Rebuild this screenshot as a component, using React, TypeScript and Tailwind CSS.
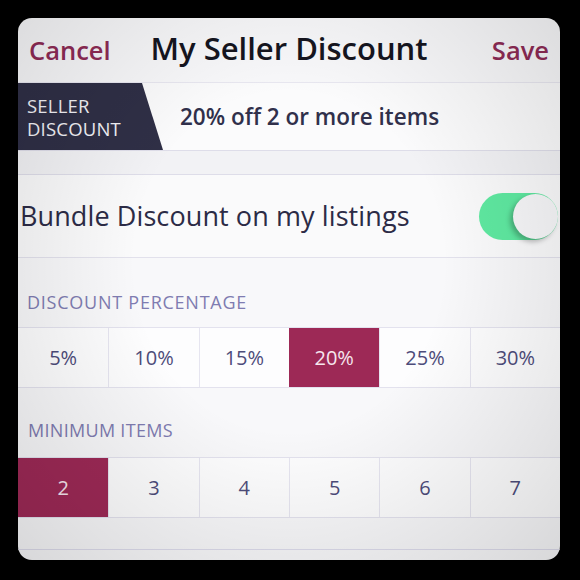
import React from "react";

const percents = ["5%", "10%", "15%", "20%", "25%", "30%"];
const items = ["2", "3", "4", "5", "6", "7"];

function OptionRow({ values, selected }: { values: string[]; selected: string }) {
  return (
    <div className="grid grid-cols-6 h-[61px] border-y border-[#e3e2ee] bg-[#fdfdfe]">
      {values.map((v, i) => (
        <div
          key={v}
          className={
            v === selected
              ? "flex items-center justify-center bg-[#9d2956] text-[#f6e6ee] text-[20px]"
              : "flex items-center justify-center text-[#4d4c7a] text-[20px] " +
                (i > 0 ? "border-l border-[#e6e5f0]" : "")
          }
        >
          {v}
        </div>
      ))}
    </div>
  );
}

export default function App() {
  return (
    <div className="w-[580px] h-[580px] bg-black p-[18px]" style={{ fontFamily: '"Open Sans", "Liberation Sans", sans-serif' }}>
      <div className="relative w-[542px] h-[542px] rounded-[14px] overflow-hidden bg-[#f8f8fa] flex flex-col">
        {/* Header */}
        <div className="h-[65px] grid grid-cols-[1fr_auto_1fr] items-center px-[11px] border-b border-[#e8e7f0] shrink-0">
          <span className="justify-self-start text-[25.5px] font-semibold text-[#8e2b55] mt-[1px]">Cancel</span>
          <span className="text-[31px] font-semibold text-[#15151f] -mt-[3px]">My Seller Discount</span>
          <span className="justify-self-end text-[25.5px] font-semibold text-[#8e2b55] mt-[1px]">Save</span>
        </div>

        {/* Seller discount banner */}
        <div className="h-[68px] flex items-center border-b border-[#dedde9] bg-[#fbfbfc] shrink-0">
          <div
            className="h-full w-[145px] bg-[#2f2f46] flex flex-col justify-center pl-[9px] text-[#f2f2f6] text-[18.5px] leading-[23px] tracking-[0.2px]"
            style={{ clipPath: "polygon(0 0, 124px 0, 145px 100%, 0 100%)" }}
          >
            <span>SELLER</span>
            <span>DISCOUNT</span>
          </div>
          <span className="ml-[17px] text-[22.5px] font-semibold text-[#30304b]">20% off 2 or more items</span>
        </div>

        <div className="h-[24px] bg-[#f2f2f5] border-b border-[#dedde9] shrink-0" />

        {/* Bundle row */}
        <div className="h-[83px] flex items-center justify-between pl-[2px] pr-[2px] border-b border-[#e2e1ec] bg-[#fafafb] shrink-0">
          <span className="text-[27px] text-[#2c2b46] tracking-[0.1px]">Bundle Discount on my listings</span>
          <div className="relative w-[79px] h-[47px] rounded-full bg-[#5fe9a1]">
            <div className="absolute right-0 top-[1px] w-[45px] h-[45px] rounded-full bg-[#f7f7f9] shadow-[-3px_3px_5px_rgba(0,0,0,0.25)]" />
          </div>
        </div>

        {/* Discount percentage */}
        <div className="h-[69px] pt-[35px] pl-[9px] shrink-0">
          <div className="text-[18px] leading-[18px] text-[#7f7cb1] tracking-[0.75px]">DISCOUNT PERCENTAGE</div>
        </div>
        <OptionRow values={percents} selected="20%" />

        {/* Minimum items */}
        <div className="h-[69px] pt-[33px] pl-[10px] shrink-0">
          <div className="text-[18px] leading-[18px] text-[#7f7cb1] tracking-[0.3px]">MINIMUM ITEMS</div>
        </div>
        <OptionRow values={items} selected="2" />

        <div className="h-[32px] border-b border-[#dddcec] shrink-0" />
        <div className="flex-1" />

        {/* Photo vignette */}
        <div className="pointer-events-none absolute inset-0 bg-[radial-gradient(ellipse_at_50%_45%,rgba(0,0,0,0)_40%,rgba(0,0,0,0.13)_100%)]" />
      </div>
    </div>
  );
}
